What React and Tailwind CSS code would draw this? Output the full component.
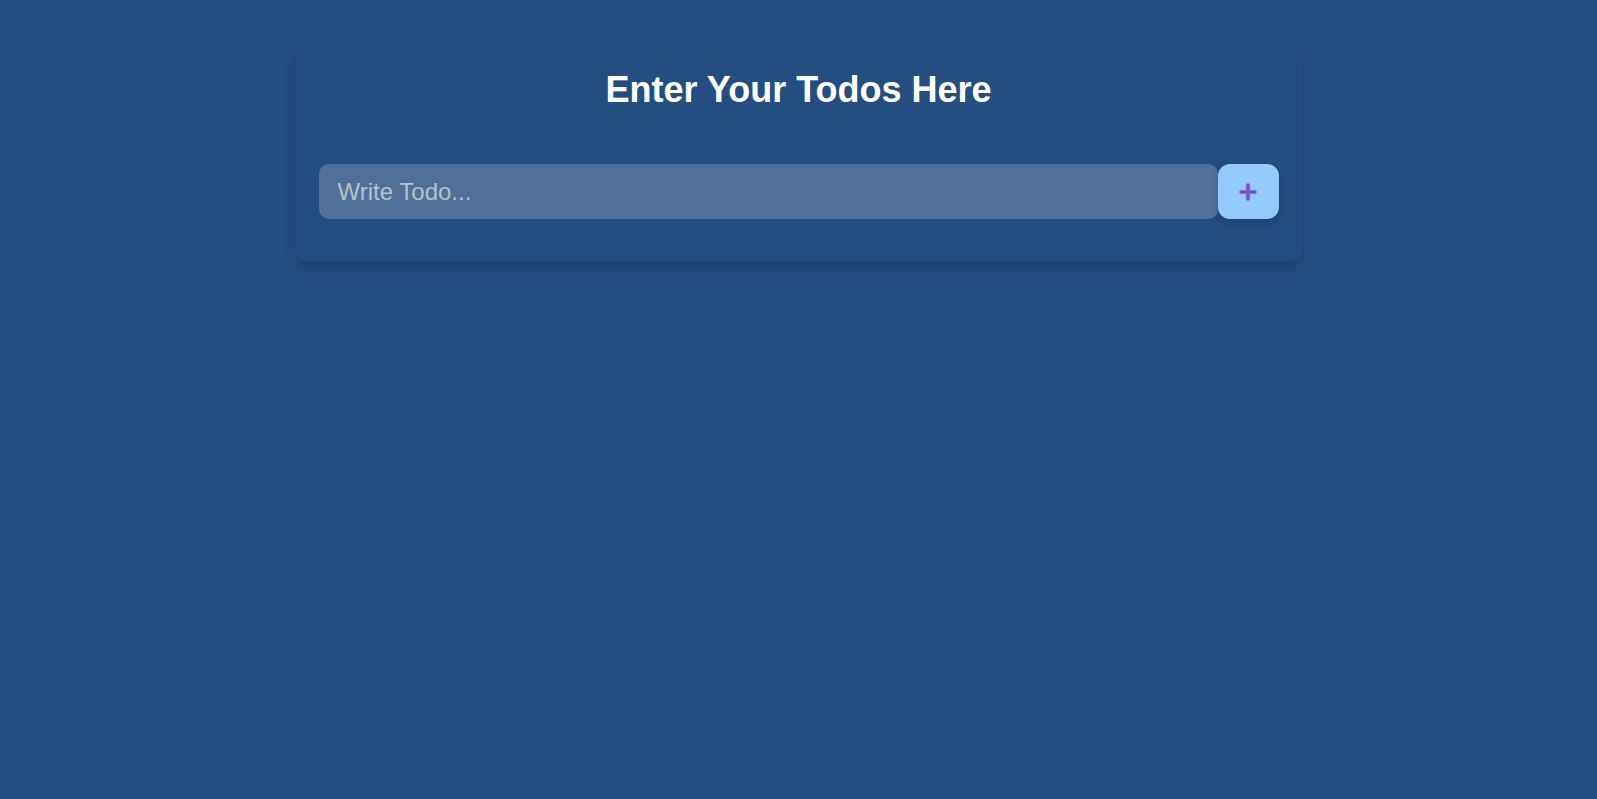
import { useState } from 'react'

export default function App() {
  const [todo, setTodo] = useState('')

  return (
    <div className="min-h-screen bg-[#244e80] pt-10 font-['Liberation_Sans',Arial,sans-serif]">
      <div className="mx-auto w-[1008px] rounded-xl bg-[#244e80] px-6 pt-[30px] pb-[42px] shadow-[0_8px_12px_-2px_rgba(0,0,0,0.18)]">
        <h1 className="text-center text-[36px] leading-[40px] font-bold text-white">Enter Your Todos Here</h1>

        <form className="mt-[54px] flex" onSubmit={e => e.preventDefault()}>
          <input
            type="text"
            value={todo}
            onChange={e => setTodo(e.target.value)}
            placeholder="Write Todo..."
            className="h-[55px] flex-1 rounded-[10px] bg-white/20 px-[19px] text-2xl text-white outline-none placeholder:text-[#b9bfc8]"
          />
          <button
            type="submit"
            className="flex h-[55px] w-[61px] items-center justify-center rounded-xl bg-[#93c9fb] shadow-[0_4px_8px_rgba(0,0,0,0.15)]"
          >
            <svg width="18" height="18" viewBox="0 0 18 18">
              <path d="M9 2v14M2 9h14" stroke="#7b51c9" strokeWidth="3.5" strokeLinecap="round" />
            </svg>
          </button>
        </form>
      </div>
    </div>
  )
}
